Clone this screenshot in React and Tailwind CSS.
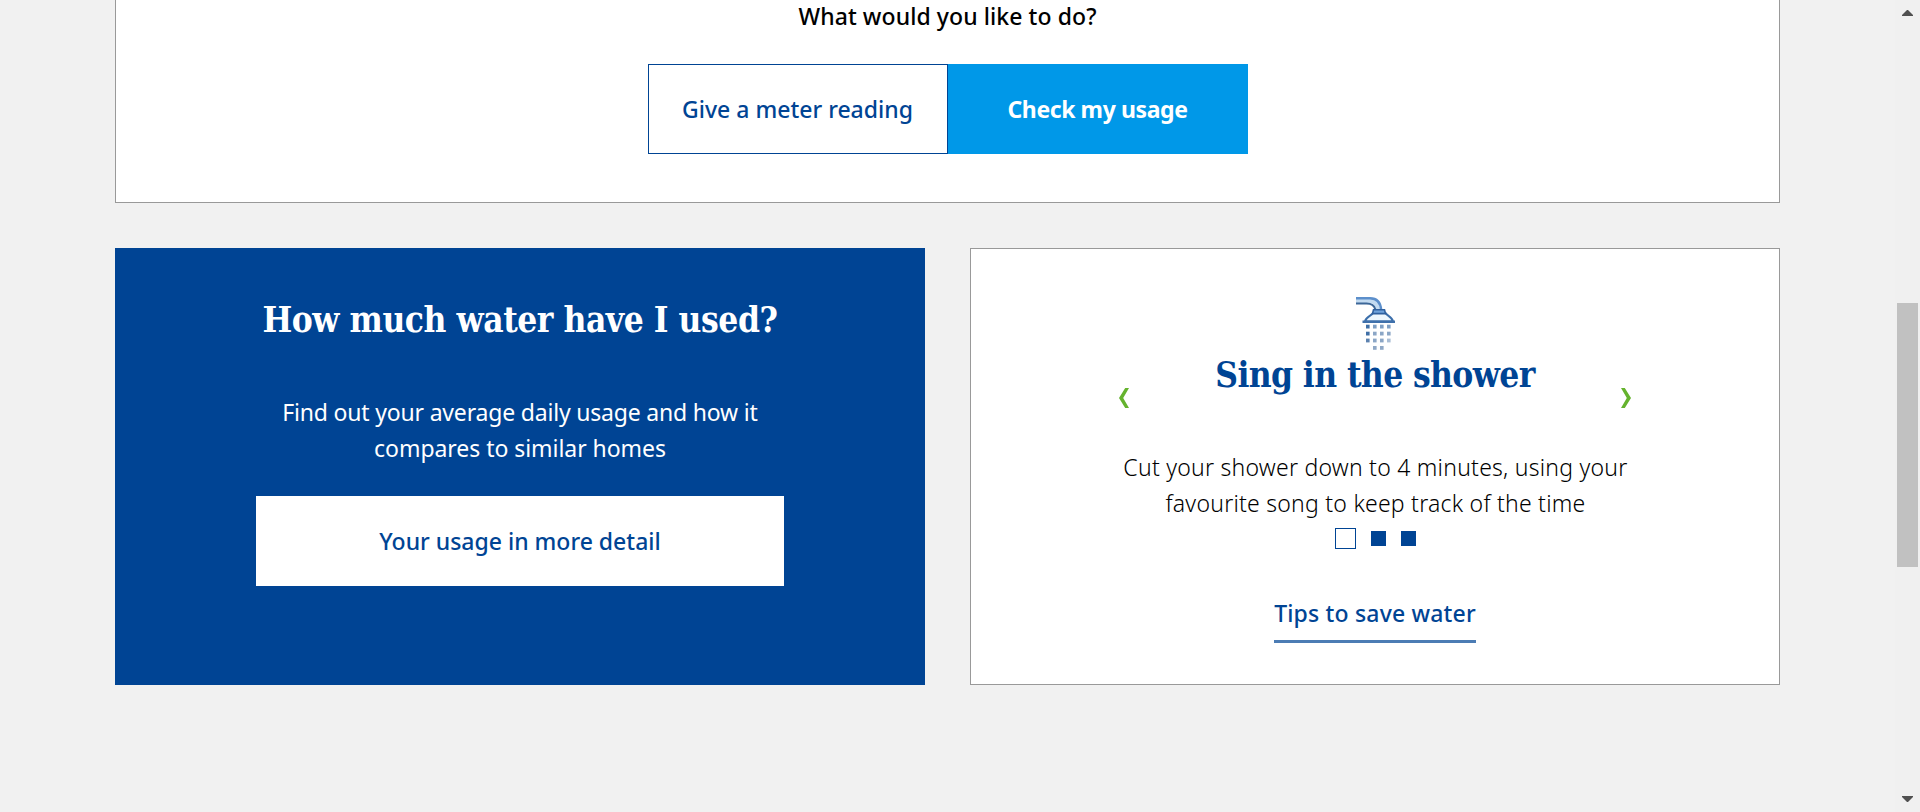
function ShowerIcon() {
  const drops = [
    [11, 27.7, "#3f6fa6"], [18, 27.7, "#7f9fc4"], [25, 27.7, "#7f9fc4"], [32, 27.7, "#7f9fc4"],
    [11, 34.7, "#3f6fa6"], [18, 34.7, "#8ba6c6"], [25, 34.7, "#8ba6c6"], [32, 34.7, "#8ba6c6"],
    [11, 41.6, "#5c82af"], [18, 41.6, "#8ba6c6"], [25, 41.6, "#8ba6c6"], [32, 41.6, "#a9bdd5"],
    [18, 49, "#8fa8c6"], [25, 49, "#8fa8c6"],
  ];
  return (
    <svg width="40" height="56" viewBox="0 0 40 56" className="overflow-visible" aria-hidden="true">
      <path d="M1 3.600H14C21.500 3.600 22.500 8 23.500 13" fill="none" stroke="#c3dbf1" strokeWidth="5" />
      <path d="M1 1.200H15C22 1.200 25.600 5.500 26.200 13" fill="none" stroke="#5c8fcb" strokeWidth="2.400" />
      <path d="M1 6.600H11.500C16.500 6.600 19.400 8.500 20.400 12.500" fill="none" stroke="#3c6798" strokeWidth="2" />
      <path d="M18 16H30.500C32 19 37 19.500 38 24.500H10C11 19.500 16.500 19 18 16Z" fill="#edf7fe" stroke="#3c6fab" strokeWidth="2" />
      <path d="M18.500 12.800H29.500L30.500 16.600H17.500Z" fill="#6fa3dc" stroke="#2f619f" strokeWidth="1.600" />
      <path d="M7.500 24.700H40" stroke="#3f70ab" strokeWidth="2.600" />
      {drops.map(([x, y, c]) => (
        <rect key={`${x}-${y}`} x={x} y={y} width="3.600" height="3.800" fill={c} />
      ))}
    </svg>
  );
}

function Chevron({ className, d, label }) {
  return (
    <button type="button" aria-label={label} className={className}>
      <svg width="10" height="20" viewBox="0 0 10 20" className="block">
        <path d={d} fill="#65b32e" />
      </svg>
    </button>
  );
}

function Scrollbar() {
  return (
    <div className="flex w-[25px] flex-col items-center bg-[#f0f0f0] py-[10px]">
      <svg width="11" height="6" viewBox="0 0 11 6" className="block">
        <path d="M5 0H6L11 5V6H0V5Z" fill="#505050" />
      </svg>
      <div className="mt-[287px] h-[264px] w-[21px] bg-[#c1c1c1]" />
      <svg width="11" height="6" viewBox="0 0 11 6" className="mt-auto block">
        <path d="M0 0H11V1L6 6H5L0 1Z" fill="#505050" />
      </svg>
    </div>
  );
}

export default function App() {
  return (
    <div className="flex h-[812px] w-full overflow-hidden bg-[#f1f1f1] font-['Noto_Sans','Open_Sans',sans-serif] text-[23px] leading-[36px] text-black">
      <main className="flex flex-1 flex-col gap-[45px] px-[115px]">
        <section className="flex h-[203px] flex-col items-center justify-end overflow-hidden border border-t-0 border-[#999] bg-white pb-12">
          <p className="mb-[30px] shrink-0 font-medium tracking-[0.08px]">What would you like to do?</p>
          <div className="flex h-[90px] w-[600px] shrink-0">
            <button type="button" className="w-1/2 border border-[#004494] font-medium text-[#004494]">
              Give a meter reading
            </button>
            <button type="button" className="w-1/2 bg-[#0098e8] font-bold tracking-[-0.4px] text-white">
              Check my usage
            </button>
          </div>
        </section>

        <div className="grid h-[437px] grid-cols-2 gap-[45px]">
          <section className="flex flex-col items-center bg-[#004494] pt-[50px] text-center text-white">
            <h2 className="font-['DejaVu_Serif_Condensed','DejaVu_Serif',serif] text-[35px] leading-[44px] font-bold tracking-[-0.45px]">
              How much water have I used?
            </h2>
            <p className="mt-[52px]">
              <span className="block tracking-[-0.19px]">Find out your average daily usage and how it</span>
              <span className="block tracking-[-0.05px]">compares to similar homes</span>
            </p>
            <button type="button" className="mt-[30px] h-[90px] w-[528px] bg-white font-medium text-[#004494]">
              Your usage in more detail
            </button>
          </section>

          <section className="flex flex-col items-center border border-[#999] bg-white pt-12 text-center">
            <div className="relative flex w-[514px] flex-col items-center">
              <ShowerIcon />
              <h2 className="font-['DejaVu_Serif_Condensed','DejaVu_Serif',serif] text-[35px] leading-[44px] font-bold tracking-[-0.6px] text-[#004494]">
                Sing in the shower
              </h2>
              <p className="mt-[52px] pl-px font-light tracking-[0.24px]">
                Cut your shower down to 4 minutes, using your
                <br />
                favourite song to keep track of the time
              </p>
              <Chevron label="Previous tip" className="absolute top-[91px] left-px" d="M6.200 0H10L4.200 10L10 20H6.200L0 10Z" />
              <Chevron label="Next tip" className="absolute top-[91px] right-px" d="M3.800 0H0L5.800 10L0 20H3.800L10 10Z" />
            </div>
            <div className="mt-[7px] flex items-center gap-[15px]">
              <span className="size-[21px] border border-[#004494]" />
              <span className="size-[15px] bg-[#004494]" />
              <span className="size-[15px] bg-[#004494]" />
            </div>
            <a href="#tips" className="mt-[46px] border-b-3 border-[#4c7cb4] pb-[9px] font-medium tracking-[0.18px] text-[#004494]">
              Tips to save water
            </a>
          </section>
        </div>
      </main>
      <Scrollbar />
    </div>
  );
}
